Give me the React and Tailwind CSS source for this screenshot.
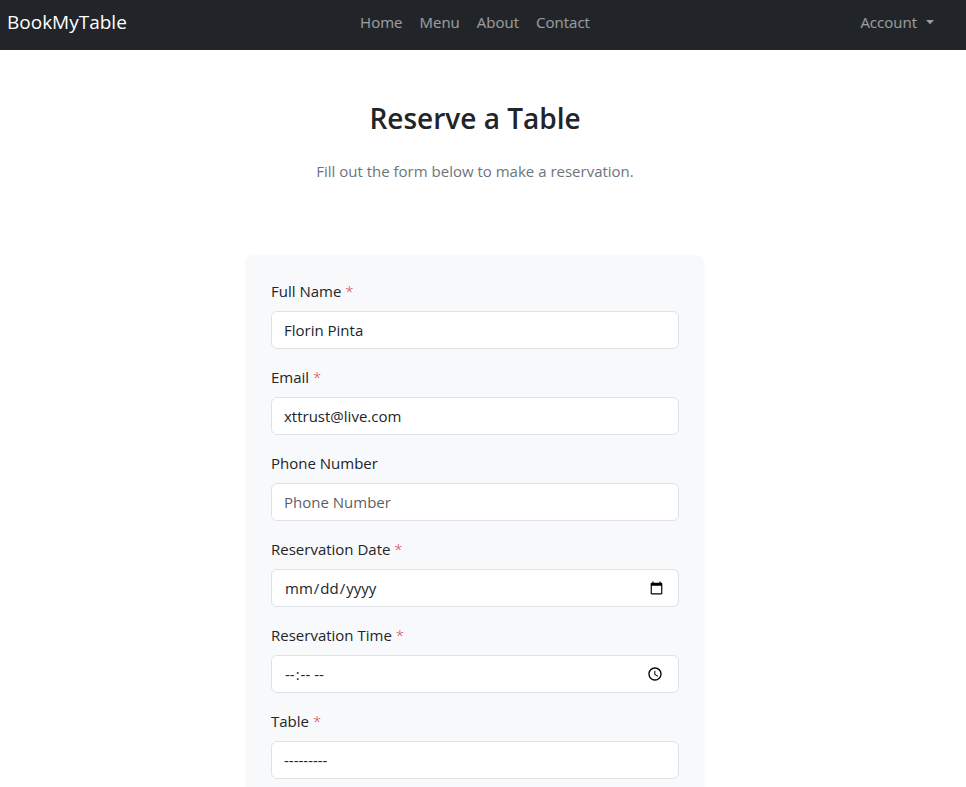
import { useState } from "react";

const controlClass =
  "block h-[38px] w-full appearance-none rounded-md border border-[#dee2e6] bg-white px-3 text-[15px] leading-6 text-[#212529] placeholder:text-[#212529]/75";

const links = ["Home", "Menu", "About", "Contact"];

function Field({ id, label, required, children }) {
  return (
    <div>
      <label htmlFor={id} className="mb-2 block text-[15px] leading-6">
        {label}
        {required && <span className="font-light text-[#dc3545]"> *</span>}
      </label>
      {children}
    </div>
  );
}

function Navbar() {
  return (
    <header className="bg-[#212529] pr-4">
      <nav className="grid h-[50px] grid-cols-[1fr_auto_1fr] items-start px-[7px] pt-[2px] text-[15px] leading-6 text-white/55">
        <a href="#" className="justify-self-start pt-1 text-[19px] leading-8 text-white">
          BookMyTable
        </a>
        <ul className="flex gap-[17px] pt-2">
          {links.map((link) => (
            <li key={link}>
              <a href="#">{link}</a>
            </li>
          ))}
        </ul>
        <button type="button" className="flex items-center gap-2 justify-self-end pt-2 pr-2">
          Account
          <svg width="10" height="5" viewBox="0 0 10 5" fill="currentColor" aria-hidden="true">
            <path d="M1 0h8L5 4.3z" />
          </svg>
        </button>
      </nav>
    </header>
  );
}

export default function App() {
  const [form, setForm] = useState({
    name: "Florin Pinta",
    email: "xttrust@live.com",
    phone: "",
    date: "",
    time: "",
    table: "",
  });
  const bind = (key) => ({
    id: key,
    name: key,
    value: form[key],
    onChange: (e) => setForm({ ...form, [key]: e.target.value }),
  });

  return (
    <div className="flex h-screen flex-col overflow-hidden bg-white font-['Segoe_UI','Open_Sans','Noto_Sans',sans-serif] text-[#212529]">
      <Navbar />
      <main className="min-h-0 flex-1 overflow-hidden pt-12 pr-4">
        <div className="text-center">
          <h1 className="text-[28px] leading-10 font-semibold">Reserve a Table</h1>
          <p className="mt-[21px] text-[15px] leading-6 text-[#6c757d]">
            Fill out the form below to make a reservation.
          </p>
        </div>
        <form className="mx-auto mt-[72px] flex w-full max-w-[458px] flex-col gap-4 rounded-lg bg-[#f8f9fb] px-[25px] py-6 shadow-[0_1px_3px_rgba(0,0,0,0.04)]">
          <Field id="name" label="Full Name" required>
            <input type="text" className={controlClass} {...bind("name")} />
          </Field>
          <Field id="email" label="Email" required>
            <input type="email" className={controlClass} {...bind("email")} />
          </Field>
          <Field id="phone" label="Phone Number">
            <input type="tel" placeholder="Phone Number" className={controlClass} {...bind("phone")} />
          </Field>
          <Field id="date" label="Reservation Date" required>
            <input type="date" className={controlClass} {...bind("date")} />
          </Field>
          <Field id="time" label="Reservation Time" required>
            <input type="time" className={controlClass} {...bind("time")} />
          </Field>
          <Field id="table" label="Table" required>
            <select className={controlClass} {...bind("table")}>
              <option value="">---------</option>
            </select>
          </Field>
        </form>
      </main>
    </div>
  );
}
